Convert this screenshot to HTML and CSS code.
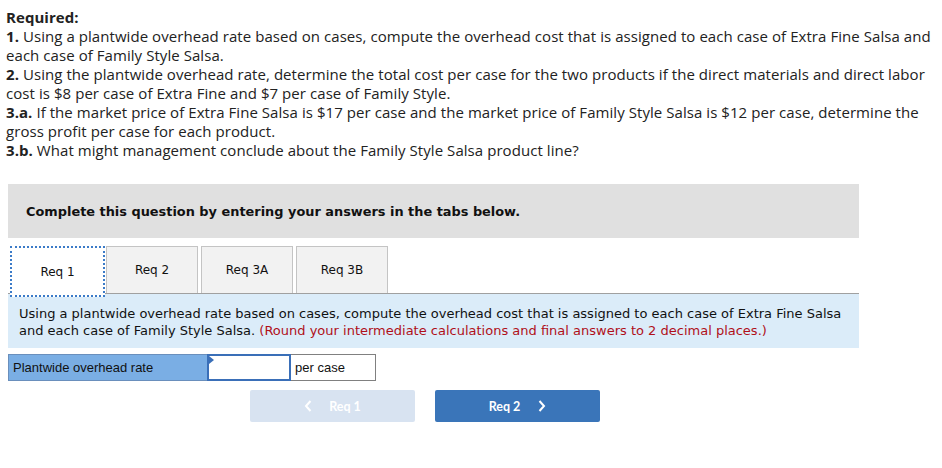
FILE: index.html
```html
<!DOCTYPE html>
<html>
<head>
<meta charset="utf-8">
<link rel="stylesheet" href="styles.css">
</head>
<body>
<div class="required">
  <p><b>Required:</b></p>
  <p><b>1.</b> Using a plantwide overhead rate based on cases, compute the overhead cost that is assigned to each case of Extra Fine Salsa and each case of Family Style Salsa.</p>
  <p><b>2.</b> Using the plantwide overhead rate, determine the total cost per case for the two products if the direct materials and direct labor cost is $8 per case of Extra Fine and $7 per case of Family Style.</p>
  <p><b>3.a.</b> If the market price of Extra Fine Salsa is $17 per case and the market price of Family Style Salsa is $12 per case, determine the gross profit per case for each product.</p>
  <p><b>3.b.</b> What might management conclude about the Family Style Salsa product line?</p>
</div>

<div class="question">
<div class="banner">Complete this question by entering your answers in the tabs below.</div>

<div class="tabs">
  <div class="tab active">Req 1</div>
  <div class="tab">Req 2</div>
  <div class="tab">Req 3A</div>
  <div class="tab">Req 3B</div>
</div>

<div class="panel">Using a plantwide overhead rate based on cases, compute the overhead cost that is assigned to each case of Extra Fine Salsa and each case of Family Style Salsa. <span class="red">(Round your intermediate calculations and final answers to 2 decimal places.)</span></div>

<div class="answer">
  <div class="label">Plantwide overhead rate</div>
  <div class="input"><span class="flag"></span></div>
  <div class="unit">per case</div>
</div>

<div class="nav">
  <div class="btn prev"><svg class="chev left" width="8" height="12" viewBox="0 0 8 12"><path d="M6.5 1 L2 6 L6.5 11" fill="none" stroke="#fff" stroke-width="2"/></svg>Req 1</div>
  <div class="btn next">Req 2<svg class="chev right" width="8" height="12" viewBox="0 0 8 12"><path d="M1.5 1 L6 6 L1.5 11" fill="none" stroke="#fff" stroke-width="2"/></svg></div>
</div>
</div>
</body>
</html>
```

FILE: styles.css
```css
html, body { margin: 0; padding: 0; background: #fff; }
body { padding: 0 0 0 6px; }

.required {
  font-family: "Open Sans", Lato, sans-serif;
  font-size: 15px;
  letter-spacing: 0.06px;
  line-height: 19px;
  color: #222;
  padding-top: 8px;
  width: 930px;
}
.required p { margin: 0; }
.required b { font-weight: 700; }

.question {
  width: 851px;
  margin-left: 2px;
}

.banner {
  margin-top: 24px;
  height: 54px;
  background: #e0e0e0;
  font-family: "DejaVu Sans", Verdana, sans-serif;
  font-weight: bold;
  font-size: 12.9px;
  color: #111;
  display: flex;
  align-items: center;
  padding-left: 18px;
}

.tabs {
  display: flex;
  margin-top: 8px;
  padding-left: 2px;
  gap: 3px;
  height: 47px;
}
.tab {
  width: 90px;
  background: #f2f2f2;
  border: 1px solid #c4c4c4;
  border-bottom: none;
  font-family: "DejaVu Sans", Verdana, sans-serif;
  font-size: 12px;
  color: #111;
  display: flex;
  align-items: center;
  justify-content: center;
}
.tab.active {
  background: #fff;
  border: 2px dotted #3b7bc8;
  width: 91px;
  margin-right: -2px;
  position: relative;
  z-index: 1;
  height: 47px;
}

.panel {
  background: #dbecf9;
  border-top: 1px solid #a0a0a0;
  height: 55px;
  box-sizing: border-box;
  padding: 11px 12px 0 11px;
  font-family: "DejaVu Sans", Verdana, sans-serif;
  font-size: 13px;
  line-height: 17px;
  color: #111;
}
.red { color: #b0101a; }

.answer {
  display: flex;
  margin-top: 6px;
  height: 27px;
  font-family: "Liberation Sans", Arial, sans-serif;
  font-size: 13px;
  color: #111;
}
.label {
  width: 199px;
  box-sizing: border-box;
  background: #7aaee4;
  border: 1px solid #6a8fbc;
  border-right: none;
  padding-left: 4px;
  display: flex;
  align-items: center;
}
.input {
  width: 84px;
  box-sizing: border-box;
  border: 2px solid #3a6fb8;
  background: #fff;
  position: relative;
}
.flag {
  position: absolute;
  left: 0;
  top: 0;
  width: 0;
  height: 0;
  border-top: 4px solid transparent;
  border-bottom: 4px solid transparent;
  border-left: 5px solid #3a6fb8;
}
.unit {
  width: 85px;
  box-sizing: border-box;
  border: 1px solid #808080;
  border-left: none;
  background: #fff;
  padding-left: 4px;
  display: flex;
  align-items: center;
}

.nav {
  display: flex;
  gap: 20px;
  margin-top: 9px;
  padding-left: 242px;
}
.btn {
  width: 165px;
  height: 32px;
  border-radius: 2px;
  color: #fff;
  font-family: Lato, "Open Sans", sans-serif;
  font-weight: 700;
  font-size: 12.5px;
  display: flex;
  align-items: center;
  justify-content: center;
}
.prev { background: #d8e3f1; }
.next { background: #3a75b9; }
.chev { display: block; }
.chev.left { margin-right: 17px; }
.chev.right { margin-left: 18px; }
```
